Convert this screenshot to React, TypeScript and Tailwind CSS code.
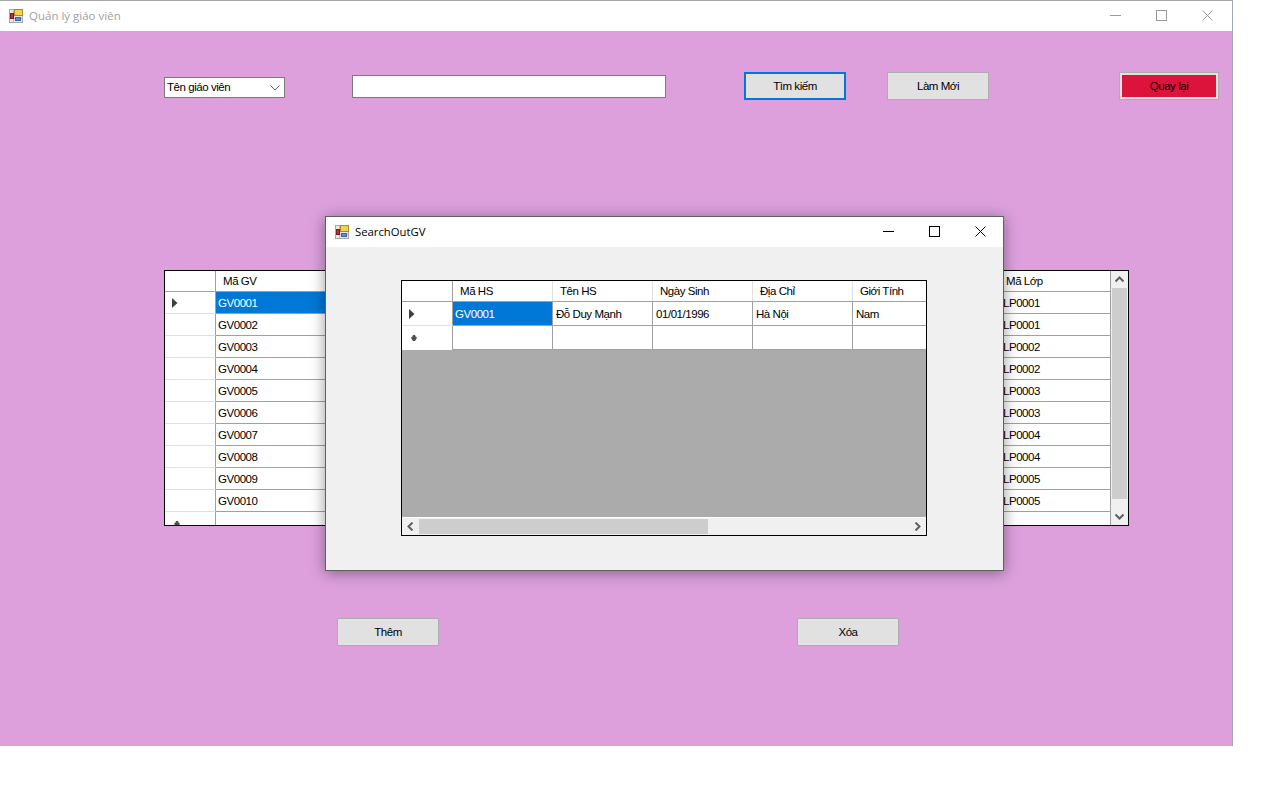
const uiFont = "font-['Liberation_Sans',Arial,sans-serif] text-[11.5px] tracking-[-0.45px] text-black";

const teachers = ['GV0001', 'GV0002', 'GV0003', 'GV0004', 'GV0005', 'GV0006', 'GV0007', 'GV0008', 'GV0009', 'GV0010'];
const classes = ['LP0001', 'LP0001', 'LP0002', 'LP0002', 'LP0003', 'LP0003', 'LP0004', 'LP0004', 'LP0005', 'LP0005'];

const AppIcon = () => (
  <svg width="14" height="14" viewBox="0 0 14 14" className="shrink-0">
    <rect x="0.500" y="0.500" width="13" height="13" fill="#e8e8e8" stroke="#a8a8a8" />
    <path d="M4.500 1v12M1 9.500h12" stroke="#bdbdbd" />
    <rect x="5.500" y="0.500" width="8" height="6" fill="#f6cf4e" stroke="#b08a20" />
    <rect x="1.500" y="4.500" width="3" height="5" fill="#cf2a2a" stroke="#7e1a1a" />
    <rect x="6.500" y="8.500" width="5" height="3" fill="#5b8fd8" stroke="#3a66a8" />
  </svg>
);

const WindowControls = ({ color, gap }: { color: string; gap: string }) => (
  <div className={`-mt-px flex items-center ${gap}`}>
    <svg width="11" height="11" viewBox="0 0 11 11">
      <path d="M0 5.500h11" stroke={color} />
    </svg>
    <svg width="11" height="11" viewBox="0 0 11 11">
      <rect x="0.500" y="0.500" width="10" height="10" fill="none" stroke={color} />
    </svg>
    <svg width="11" height="11" viewBox="0 0 11 11">
      <path d="M0.500 0.500l10 10M10.500 0.500l-10 10" stroke={color} />
    </svg>
  </div>
);

const RowArrow = () => (
  <svg width="6" height="10" viewBox="0 0 6 10">
    <path d="M0 0l5.500 5L0 10z" fill="#404040" />
  </svg>
);

const NewRowMark = () => (
  <svg width="6" height="6" viewBox="0 0 6 6">
    <path d="M2 0h2l.5 1.500L6 2.500 5 4.500 4 6H2L1 4.500 0 2.500l1.500-1z" fill="#505050" />
  </svg>
);

const Chevron = ({ d }: { d: string }) => (
  <svg width="9" height="9" viewBox="0 0 9 9">
    <path d={d} fill="none" stroke="#606060" strokeWidth="2" />
  </svg>
);

const WinButton = ({ label, className }: { label: string; className: string }) => (
  <button className={`h-[28px] w-[102px] bg-[#e1e1e1] pt-px ${uiFont} ${className}`}>{label}</button>
);

const TeacherGrid = () => (
  <div className={`ml-[164px] mt-[170px] flex h-[256px] w-[965px] overflow-hidden border border-black bg-white ${uiFont}`}>
    <div className="flex-1 overflow-hidden">
      <div className="flex h-[21px] border-b border-[#a0a0a0]">
        <div className="w-[51px] border-r border-[#a0a0a0]" />
        <div className="flex-1 pl-[7px] leading-[20px]">Mã GV</div>
        <div className="w-[110px] pl-[6px] leading-[20px]">Mã Lớp</div>
      </div>
      {teachers.map((code, i) => (
        <div key={code} className="flex h-[22px]">
          <div className="flex w-[51px] items-center border-b border-r border-b-[#e0e0e0] border-r-[#a0a0a0] pl-[7px]">
            {i === 0 && <RowArrow />}
          </div>
          <div className={`flex-1 border-b border-[#a0a0a0] pl-[2px] leading-[23px] ${i === 0 ? 'bg-[#0078d7] text-white' : ''}`}>
            {code}
          </div>
          <div className="w-[110px] border-b border-[#a0a0a0] pl-[3px] leading-[23px]">{classes[i]}</div>
        </div>
      ))}
      <div className="flex h-[22px]">
        <div className="w-[51px] border-r border-[#a0a0a0] pl-[9px] pt-[9px]">
          <NewRowMark />
        </div>
      </div>
    </div>
    <div className="flex w-[18px] flex-col border-l border-[#a0a0a0] bg-[#f0f0f0]">
      <div className="flex h-[17px] items-center justify-center">
        <Chevron d="M0.500 6.500l4-4 4 4" />
      </div>
      <div className="mx-px h-[211px] bg-[#cdcdcd]" />
      <div className="mt-auto flex h-[17px] items-center justify-center">
        <Chevron d="M0.500 2.500l4 4 4-4" />
      </div>
    </div>
  </div>
);

const headers = ['Mã HS', 'Tên HS', 'Ngày Sinh', 'Địa Chỉ', 'Giới Tính'];
const values = ['GV0001', 'Đỗ Duy Mạnh', '01/01/1996', 'Hà Nội', 'Nam'];

const ResultGrid = () => (
  <div className={`flex h-[256px] w-[526px] flex-col overflow-hidden border border-black bg-[#ababab] ${uiFont}`}>
    <div className="flex h-[21px] shrink-0 border-b border-[#a0a0a0] bg-white">
      <div className="w-[51px] shrink-0 border-r border-[#a0a0a0]" />
      {headers.map((h) => (
        <div key={h} className="w-[100px] shrink-0 border-r border-[#e0e0e0] pl-[7px] leading-[20px]">
          {h}
        </div>
      ))}
    </div>
    <div className="flex h-[24px] shrink-0 bg-white">
      <div className="flex w-[51px] shrink-0 items-center border-b border-r border-b-[#e0e0e0] border-r-[#a0a0a0] pl-[7px]">
        <RowArrow />
      </div>
      {values.map((v, i) => (
        <div
          key={v}
          className={`w-[100px] shrink-0 border-b border-r border-[#a0a0a0] leading-[24px] ${i === 0 ? 'bg-[#0078d7] pl-[2px] text-white' : 'pl-[3px]'}`}
        >
          {v}
        </div>
      ))}
    </div>
    <div className="flex h-[24px] shrink-0 bg-white">
      <div className="flex w-[51px] shrink-0 items-center border-r border-[#a0a0a0] pl-[9px]">
        <NewRowMark />
      </div>
      {values.map((v) => (
        <div key={v} className="w-[100px] shrink-0 border-b border-r border-[#a0a0a0]" />
      ))}
    </div>
    <div className="mt-auto flex h-[18px] shrink-0 items-center border-t border-white bg-[#f0f0f0]">
      <div className="flex w-[17px] justify-center">
        <Chevron d="M6.500 0.500l-4 4 4 4" />
      </div>
      <div className="h-[15px] w-[289px] bg-[#cdcdcd]" />
      <div className="ml-auto flex w-[17px] justify-center">
        <Chevron d="M2.500 0.500l4 4-4 4" />
      </div>
    </div>
  </div>
);

export default function App() {
  return (
    <div className="relative h-[790px] w-[1265px] overflow-hidden bg-white">
      {/* cua so chinh */}
      <div className="h-[746px] w-[1233px] border-r border-t border-r-[#a0a8b8] border-t-[#a9a9a9]">
        <div className="flex h-[30px] items-center justify-between bg-white pl-[9px] pr-[19px]">
          <div className="flex items-center gap-[6px]">
            <AppIcon />
            <span className="font-['Open_Sans',sans-serif] text-[11.5px] text-[#a0a0a0]">Quản lý giáo viên</span>
          </div>
          <WindowControls color="#999999" gap="gap-[35px]" />
        </div>
        <div className="h-[715px] overflow-hidden bg-[#dda0dd]">
          <div className="flex items-start pt-[41px]">
            <div className={`ml-[164px] mt-[5px] flex h-[21px] w-[121px] items-center justify-between border border-[#7a7a7a] bg-white pl-[2px] pr-[4px] ${uiFont}`}>
              <span>Tên giáo viên</span>
              <svg width="10" height="6" viewBox="0 0 10 6">
                <path d="M0.500 0.500L5 5l4.500-4.500" fill="none" stroke="#606060" />
              </svg>
            </div>
            <div className="ml-[67px] mt-[3px] h-[23px] w-[314px] border border-[#7a7a7a] bg-white" />
            <WinButton label="Tìm kiếm" className="ml-[78px] border-2 border-[#0078d7]" />
            <WinButton label="Làm Mới" className="ml-[41px] border border-[#adadad]" />
            <button className={`ml-[130px] h-[28px] w-[100px] border border-[#adadad] bg-[#dc143c] pt-px outline-2 -outline-offset-3 outline-[#e1e1e1] ${uiFont}`}>
              Quay lại
            </button>
          </div>
          <TeacherGrid />
          <div className="mt-[92px] flex">
            <WinButton label="Thêm" className="ml-[337px] border border-[#adadad]" />
            <WinButton label="Xóa" className="ml-[358px] border border-[#adadad]" />
          </div>
        </div>
      </div>

      {/* hop thoai SearchOutGV */}
      <div className="absolute left-[325px] top-[216px] h-[355px] w-[679px] border border-[#5f5f5f] bg-[#f0f0f0] shadow-[0_2px_14px_rgba(0,0,0,0.4)]">
        <div className="flex h-[30px] items-center justify-between bg-white pl-[9px] pr-[17px]">
          <div className="flex items-center gap-[6px]">
            <AppIcon />
            <span className="font-['Open_Sans',sans-serif] text-[11.3px] text-black">SearchOutGV</span>
          </div>
          <WindowControls color="#000000" gap="gap-[35px]" />
        </div>
        <div className="pl-[75px] pt-[33px]">
          <ResultGrid />
        </div>
      </div>
    </div>
  );
}
